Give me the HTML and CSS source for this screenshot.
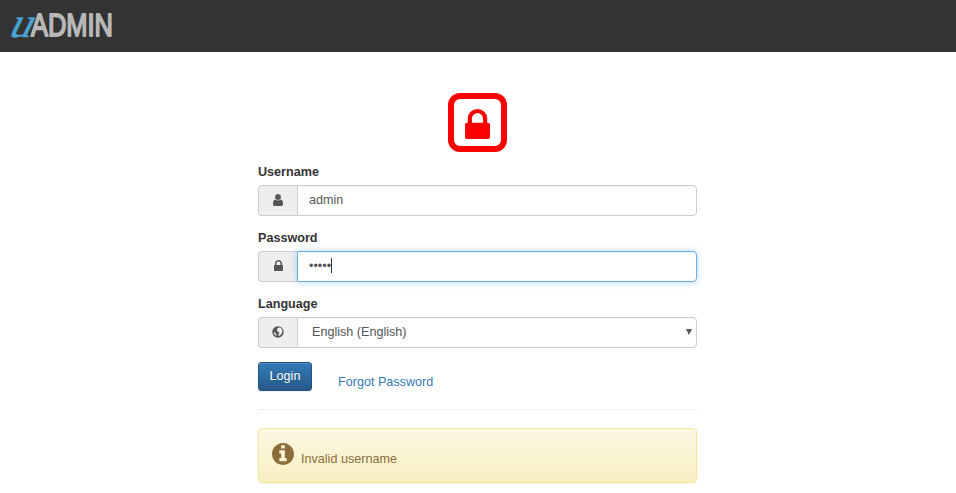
FILE: index.html
```html
<!DOCTYPE html>
<html lang="en">
<head>
<meta charset="utf-8">
<title>uAdmin</title>
<link rel="stylesheet" href="styles.css">
</head>
<body>
<header class="navbar">
  <svg class="logo" width="120" height="52" viewBox="0 0 120 52" role="img" aria-label="uADMIN">
    <text class="logo-u" transform="translate(7 36.500) skewX(-26)" textLength="22" lengthAdjust="spacingAndGlyphs">u</text>
    <text class="logo-name" x="31" y="35.500" textLength="82" lengthAdjust="spacingAndGlyphs">ADMIN</text>
  </svg>
</header>
<main class="login">
  <div class="lock-box">
    <svg width="25" height="30" viewBox="0 128 1152 1408" preserveAspectRatio="none"><path d="M320 768h512v-192q0-106-75-181t-181-75-181 75-75 181v192zM1152 864v576q0 40-28 68t-68 28h-960q-40 0-68-28t-28-68v-576q0-40 28-68t68-28h32v-192q0-184 132-316t316-132 316 132 132 316v192h32q40 0 68 28t28 68z"/></svg>
  </div>
  <form>
    <div class="field">
      <label>Username</label>
      <div class="group">
        <span class="addon"><svg width="10" height="12" viewBox="0 128 1280 1536"><path d="M1280 1399q0 109-62.500 187t-150.500 78h-854q-88 0-150.500-78t-62.500-187q0-85 8.500-160.500t31.500-152 58.500-131 94-89 134.500-34.500q131 128 313 128t313-128q76 0 134.500 34.500t94 89 58.500 131 31.500 152 8.500 160.500zm-256-887q0 159-112.500 271.500t-271.500 112.500-271.500-112.500-112.500-271.500 112.500-271.500 271.500-112.500 271.500 112.500 112.500 271.500z"/></svg></span>
        <div class="control">admin</div>
      </div>
    </div>
    <div class="field">
      <label>Password</label>
      <div class="group">
        <span class="addon"><svg width="9" height="11" viewBox="0 128 1152 1408"><path d="M320 768h512v-192q0-106-75-181t-181-75-181 75-75 181v192zM1152 864v576q0 40-28 68t-68 28h-960q-40 0-68-28t-28-68v-576q0-40 28-68t68-28h32v-192q0-184 132-316t316-132 316 132 132 316v192h32q40 0 68 28t28 68z"/></svg></span>
        <div class="control focused"><span class="dots">•••••</span><i class="caret"></i></div>
      </div>
    </div>
    <div class="field">
      <label>Language</label>
      <div class="group">
        <span class="addon"><svg width="12" height="12" viewBox="0 0 24 24"><circle cx="12" cy="12" r="11.500"/><path class="land" d="M11 4l4-1 4 2 2 5-1 4-4 5-3 1 0-4 2-3-4-2-1-3zM3 12l3 1 3 4 0 3-4-3z"/></svg></span>
        <div class="control select"><span>English (English)</span><svg class="arrow" width="6" height="6" viewBox="0 0 6 6"><path d="M0 0h6L3 6z"/></svg></div>
      </div>
    </div>
    <div class="actions">
      <button class="btn" type="button">Login</button>
      <a class="forgot">Forgot Password</a>
    </div>
  </form>
  <hr>
  <div class="alert">
    <svg width="22" height="22" viewBox="128 128 1536 1536"><path d="M1152 1376v-160q0-14-9-23t-23-9h-96v-512q0-14-9-23t-23-9h-320q-14 0-23 9t-9 23v160q0 14 9 23t23 9h96v320h-96q-14 0-23 9t-9 23v160q0 14 9 23t23 9h448q14 0 23-9t9-23zm-128-896v-160q0-14-9-23t-23-9h-192q-14 0-23 9t-9 23v160q0 14 9 23t23 9h192q14 0 23-9t9-23zm640 416q0 209-103 385.500t-279.500 279.500-385.500 103-385.500-103-279.500-279.500-103-385.500 103-385.500 279.500-279.500 385.500-103 385.500 103 279.500 279.500 103 385.500z"/></svg>
    <span>Invalid username</span>
  </div>
</main>
</body>
</html>
```
FILE: styles.css
```css
* { box-sizing: border-box; }
body {
  margin: 0;
  height: 493px;
  overflow: hidden;
  background: #fff;
  color: #333;
  font: 12.6px/18px "Liberation Sans", Arial, sans-serif;
}
svg { display: block; fill: currentColor; overflow: visible; }
.navbar { height: 52px; background: #333; }
.logo-u {
  fill: #4ba3d3;
  stroke: #4ba3d3;
  stroke-width: .5;
  font: 42px "Liberation Serif", serif;
}
.logo-name {
  fill: #b8b8b8;
  stroke: #b8b8b8;
  stroke-width: 1.8;
  stroke-linejoin: round;
  font: 32px "Liberation Sans", sans-serif;
}
.login { width: 439px; margin: 41px 0 0 258px; }
.lock-box {
  width: 59px;
  height: 59px;
  margin: 0 auto;
  padding-top: 3px;
  border: 6px solid #f00;
  border-radius: 12px;
  color: #f00;
  display: flex;
  align-items: center;
  justify-content: center;
}
form { margin-top: 11px; }
.field { height: 66px; }
label { display: block; height: 22px; font-weight: bold; }
.group { display: flex; height: 31px; }
.addon {
  width: 39px;
  padding-bottom: 2px;
  display: flex;
  align-items: center;
  justify-content: center;
  background: #eee;
  border: 1px solid #ccc;
  border-right: 0;
  border-radius: 4px 0 0 4px;
  color: #555;
}
.control {
  flex: 1;
  display: flex;
  align-items: center;
  padding: 0 11px 2px;
  border: 1px solid #ccc;
  border-radius: 0 4px 4px 0;
  box-shadow: inset 0 1px 1px rgba(0, 0, 0, .04);
  color: #555;
}
.focused {
  border-color: #66afe9;
  box-shadow: inset 0 1px 1px rgba(0, 0, 0, .04), 0 0 6px rgba(102, 175, 233, .5);
}
.caret { width: 1px; height: 15px; background: #333; }
.select { justify-content: space-between; padding: 0 4px 2px 14px; }
.land { fill: #eee; }
.actions { display: flex; height: 29px; margin-top: 1px; }
.btn {
  width: 54px;
  height: 29px;
  padding: 0 0 2px;
  border: 1px solid #245580;
  border-radius: 3px;
  background: linear-gradient(#337ab7, #265a88);
  box-shadow: inset 0 1px 0 rgba(255, 255, 255, .15), 0 1px 1px rgba(0, 0, 0, .075);
  color: #fff;
  font: inherit;
  text-shadow: 0 -1px 0 rgba(0, 0, 0, .2);
}
.forgot { margin: 11px 0 0 26px; color: #337ab7; }
hr { height: 1px; margin: 18px 0; border: 0; background: #eee; }
.alert {
  height: 55px;
  padding: 14px 13px;
  display: flex;
  gap: 7px;
  border: 1px solid #f5e79e;
  border-radius: 4px;
  background: linear-gradient(#fcf8e3, #f8efc0);
  box-shadow: inset 0 1px 0 rgba(255, 255, 255, .25), 0 1px 2px rgba(0, 0, 0, .05);
  color: #8a6d3b;
  text-shadow: 0 1px 0 rgba(255, 255, 255, .2);
}
.alert span { margin-top: 7px; }
```
